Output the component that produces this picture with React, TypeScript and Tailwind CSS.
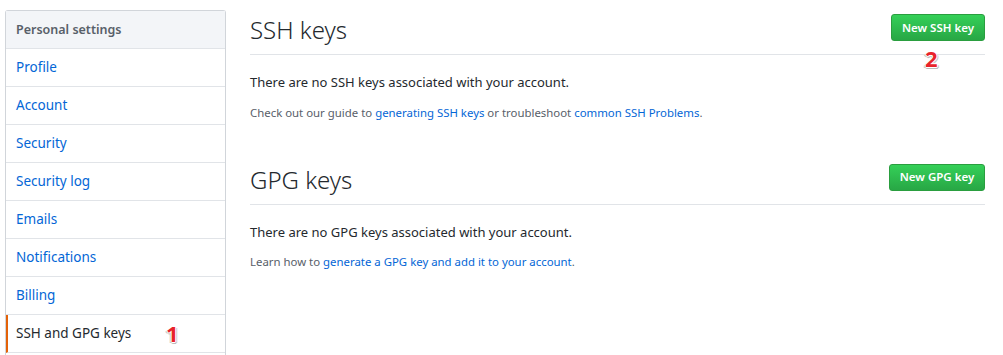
const navItems = [
  "Profile",
  "Account",
  "Security",
  "Security log",
  "Emails",
  "Notifications",
  "Billing",
];

function Marker({ n, className }: { n: string; className: string }) {
  return (
    <span
      className={"absolute font-bold text-[22px] leading-none text-[#e8232b] " + className}
      style={{
        textShadow:
          "1px 0 0 #fff, -1px 0 0 #fff, 0 1px 0 #fff, 0 -1px 0 #fff, 2px 1px 0 #ccc, -2px 1px 0 #ccc, 1px 2px 0 #bbb, 0 2px 0 #ccc",
      }}
    >
      {n}
    </span>
  );
}

function Section({
  title,
  button,
  empty,
  children,
  btnWidth,
}: {
  title: string;
  button: string;
  empty: string;
  children: React.ReactNode;
  btnWidth: string;
}) {
  return (
    <div>
      <div className="flex items-end justify-between border-b border-[#e1e4e8] pb-[9px]">
        <h2 className="text-[24px] font-light leading-[30px] text-[#24292e]">{title}</h2>
        <button
          className={
            "h-[27px] rounded-[3px] border border-[#2a9e3f] bg-gradient-to-b from-[#34d058] to-[#28a745] text-[11.5px] font-semibold text-white mb-[4px] " +
            btnWidth
          }
        >
          {button}
        </button>
      </div>
      <p className="mt-[18px] text-[13px] text-[#24292e]">{empty}</p>
      <p className="mt-[11px] text-[11.4px] text-[#586069]">{children}</p>
    </div>
  );
}

export default function App() {
  return (
    <div
      className="relative flex h-[355px] w-[1003px] gap-6 overflow-hidden bg-white pl-[5px] pr-[18px] pt-[10px]"
      style={{ fontFamily: '"Noto Sans", "Open Sans", sans-serif' }}
    >
      {/* sidebar */}
      <nav className="w-[221px] shrink-0 rounded-t-[3px] border border-b-0 border-[#d1d5da]">
        <div className="h-[38px] border-b border-[#e1e4e8] bg-[#f3f5f8] px-[10px] text-[12.5px] font-semibold leading-[37px] text-[#586069]">
          Personal settings
        </div>
        <ul>
          {navItems.map((item) => (
            <li
              key={item}
              className="h-[38px] border-b border-[#e1e4e8] px-[10px] text-[13.5px] leading-[37px] text-[#0366d6]"
            >
              {item}
            </li>
          ))}
          <li className="h-[38px] border-b border-[#e1e4e8] border-l-[2px] border-l-[#e36209] pl-[8px] text-[13.5px] leading-[37px] text-[#24292e]">
            SSH and GPG keys
          </li>
        </ul>
      </nav>

      {/* main */}
      <main className="flex-1 pt-[4px]">
        <Section
          title="SSH keys"
          button="New SSH key"
          empty="There are no SSH keys associated with your account."
          btnWidth="w-[94px]"
        >
          Check out our guide to <a className="text-[#0366d6]">generating SSH keys</a> or troubleshoot{" "}
          <a className="text-[#0366d6]">common SSH Problems</a>.
        </Section>
        <div className="mt-[43px]">
          <Section
            title="GPG keys"
            button="New GPG key"
            empty="There are no GPG keys associated with your account."
            btnWidth="w-[96px]"
          >
            Learn how to <a className="text-[#0366d6]">generate a GPG key and add it to your account</a>.
          </Section>
        </div>
      </main>

      <Marker n="1" className="left-[166px] top-[322px]" />
      <Marker n="2" className="left-[925px] top-[47px]" />
    </div>
  );
}
